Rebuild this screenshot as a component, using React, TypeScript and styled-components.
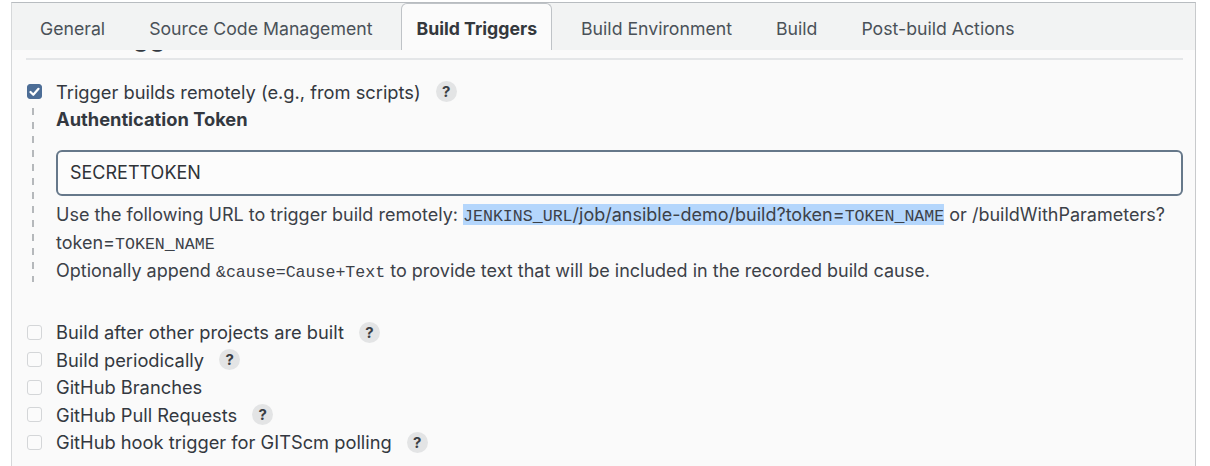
import React from "react";
import styled, { createGlobalStyle } from "styled-components";

const Global = createGlobalStyle`
  html, body { margin: 0; padding: 0; background: #ffffff; }
  body { font-family: Inter, "Noto Sans", "Liberation Sans", sans-serif; color: #333840; }
  * { box-sizing: border-box; }
`;

const Page = styled.div`
  width: 1210px;
  height: 466px;
  padding: 2px 14px 0 11px;
  overflow: hidden;
`;

const Panel = styled.div`
  height: 100%;
  border-left: 1px solid #d6d8da;
  border-right: 1px solid #c8cacc;
  border-top: 1px solid #b8bcc0;
  background: #fafafa;
  display: flex;
  flex-direction: column;
`;

const TabBar = styled.div`
  position: relative;
  z-index: 2;
  height: 47px;
  flex: none;
  background: #f2f3f3;
  display: flex;
  align-items: flex-end;
  gap: 14px;
  padding-left: 13px;
`;

const Tab = styled.div<{ $active?: boolean }>`
  height: ${(p) => (p.$active ? "47px" : "45px")};
  padding: 0 14px;
  display: flex;
  align-items: center;
  font-size: 17.7px;
  color: ${(p) => (p.$active ? "#34383d" : "#4a5158")};
  font-weight: ${(p) => (p.$active ? 700 : 400)};
  background: ${(p) => (p.$active ? "#fbfbfb" : "transparent")};
  border: ${(p) => (p.$active ? "1px solid #bfc3c7" : "1px solid transparent")};
  border-bottom: none;
  border-radius: 6px 6px 0 0;
  padding-top: ${(p) => (p.$active ? "2px" : "0")};
`;

const Content = styled.div`
  position: relative;
  z-index: 1;
  padding: 0 12px 0 14px;
  flex: 1;
`;

const SectionHeading = styled.h2`
  margin: -28px 0 0 0;
  height: 38px;
  font-size: 26px;
  font-weight: 700;
  color: #333840;
  line-height: 30px;
  border-bottom: 2px solid #e4e6e8;
  padding-left: 3px;
`;

const Block = styled.div`
  margin-top: 18px;
  display: flex;
  flex-direction: column;
`;

const Row = styled.div`
  display: flex;
  align-items: center;
  height: 27.5px;
`;

const Box = styled.span<{ $checked?: boolean }>`
  width: 15px;
  height: 15px;
  margin-left: 1px;
  margin-right: 14px;
  border-radius: 3px;
  display: inline-flex;
  align-items: center;
  justify-content: center;
  background: ${(p) => (p.$checked ? "#4c6d96" : "#fbfbfb")};
  border: 1px solid ${(p) => (p.$checked ? "#4c6d96" : "#d4d6d8")};
`;

const Label = styled.span`
  font-size: 18.3px;
  color: #333840;
`;

const Help = styled.span`
  margin-left: 15px;
  width: 21px;
  height: 21px;
  border-radius: 50%;
  background: #e3e4e5;
  color: #3a3e44;
  font-weight: 700;
  font-size: 15px;
  display: inline-flex;
  align-items: center;
  justify-content: center;
`;

const Nested = styled.div`
  display: flex;
`;

const Rail = styled.div`
  width: 30px;
  flex: none;
  display: flex;
  justify-content: flex-start;
  padding-left: 6px;
  padding-top: 2px;
`;

const DashLine = styled.div`
  width: 2px;
  height: 174px;
  background: repeating-linear-gradient(
    to bottom,
    #b5b8bb 0 7px,
    transparent 7px 14px
  );
`;

const NestedBody = styled.div`
  flex: 1;
  display: flex;
  flex-direction: column;
`;

const FieldTitle = styled.div`
  font-size: 18.3px;
  font-weight: 700;
  color: #333840;
  height: 27px;
  display: flex;
  align-items: center;
`;

const Input = styled.div`
  margin-top: 17px;
  height: 46px;
  border: 2px solid #66788a;
  border-radius: 6px;
  background: #fcfcfc;
  display: flex;
  align-items: center;
  padding-left: 12px;
  font-size: 18px;
  color: #2f3338;
`;

const HelpText = styled.div`
  margin-top: 5px;
  font-size: 18px;
  line-height: 28px;
  color: #3c4148;
`;

const Mono = styled.code`
  font-family: "Liberation Mono", "DejaVu Sans Mono", monospace;
  font-size: 16.6px;
  line-height: 1;
  color: #3c4148;
`;

const Mark = styled.span`
  background: #b4d6fc;
`;

const List = styled.div`
  margin-top: 34px;
  display: flex;
  flex-direction: column;
`;

const Check = () => (
  <svg width="11" height="10" viewBox="0 0 11 10">
    <path d="M1.5 5 L4.3 7.8 L9.5 1.8" stroke="#fff" strokeWidth="2.2" fill="none" strokeLinecap="round" strokeLinejoin="round" />
  </svg>
);

const tabs = [
  "General",
  "Source Code Management",
  "Build Triggers",
  "Build Environment",
  "Build",
  "Post-build Actions",
];

const options: { label: string; help: boolean }[] = [
  { label: "Build after other projects are built", help: true },
  { label: "Build periodically", help: true },
  { label: "GitHub Branches", help: false },
  { label: "GitHub Pull Requests", help: true },
  { label: "GitHub hook trigger for GITScm polling", help: true },
];

export default function App() {
  return (
    <>
      <Global />
      <Page>
        <Panel>
          <TabBar>
            {tabs.map((t) => (
              <Tab key={t} $active={t === "Build Triggers"}>
                {t}
              </Tab>
            ))}
          </TabBar>
          <Content>
            <SectionHeading>Build Triggers</SectionHeading>
            <Block>
              <Row>
                <Box $checked>
                  <Check />
                </Box>
                <Label>Trigger builds remotely (e.g., from scripts)</Label>
                <Help>?</Help>
              </Row>
              <Nested>
                <Rail>
                  <DashLine />
                </Rail>
                <NestedBody>
                  <FieldTitle>Authentication Token</FieldTitle>
                  <Input>SECRETTOKEN</Input>
                  <HelpText>
                    Use the following URL to trigger build remotely:{" "}
                    <Mark>
                      <Mono>JENKINS_URL</Mono>/job/ansible-demo/build?token=<Mono>TOKEN_NAME</Mono>
                    </Mark>{" "}
                    or /buildWithParameters?token=<Mono>TOKEN_NAME</Mono>
                    <br />
                    Optionally append <Mono>&amp;cause=Cause+Text</Mono> to provide text that will be included in the recorded build cause.
                  </HelpText>
                </NestedBody>
              </Nested>
              <List>
                {options.map((o) => (
                  <Row key={o.label}>
                    <Box />
                    <Label>{o.label}</Label>
                    {o.help && <Help>?</Help>}
                  </Row>
                ))}
              </List>
            </Block>
          </Content>
        </Panel>
      </Page>
    </>
  );
}
